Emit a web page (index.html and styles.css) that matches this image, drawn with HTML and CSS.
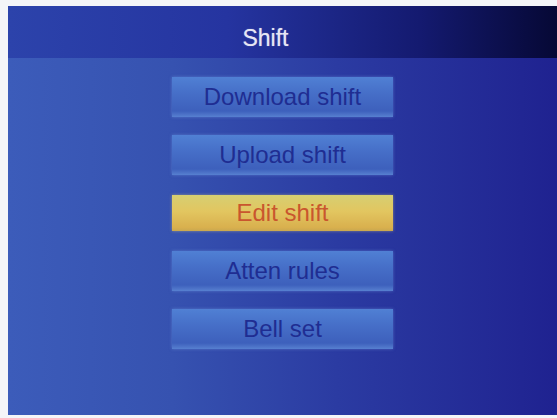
FILE: index.html
```html
<!DOCTYPE html>
<html>
<head>
<meta charset="utf-8">
<link rel="stylesheet" href="styles.css">
</head>
<body>
<div class="screen">
  <div class="header"><span class="title">Shift</span></div>
  <div class="menu">
    <div class="item">Download shift</div>
    <div class="item">Upload shift</div>
    <div class="item active">Edit shift</div>
    <div class="item">Atten rules</div>
    <div class="item">Bell set</div>
  </div>
</div>
</body>
</html>
```
FILE: styles.css
```css
html, body {
  margin: 0;
  padding: 0;
  background: #f4f5f8;
}
body {
  width: 557px;
  height: 418px;
  overflow: hidden;
  font-family: "Liberation Sans", Arial, sans-serif;
}
.screen {
  margin: 6px 0 0 8px;
  width: 549px;
  height: 409px;
  display: flex;
  flex-direction: column;
  background: linear-gradient(90deg, #3c5cba 0%, #3652b0 30%, #2b3ba2 60%, #1f2290 100%);
}
.header {
  height: 52px;
  display: flex;
  align-items: center;
  justify-content: center;
  padding-right: 34px;
  background: linear-gradient(90deg, #2c43ab 0%, #2534a0 40%, #141a70 75%, #060835 100%);
}
.title {
  color: #e6e6f4;
  font-size: 23px;
  padding-top: 13px;
  text-shadow: 0 0 1px rgba(230, 230, 244, 0.6);
}
.menu {
  display: flex;
  flex-direction: column;
  align-items: center;
  gap: 18px;
  padding-top: 19px;
}
.item {
  width: 221px;
  height: 40px;
  display: flex;
  align-items: center;
  justify-content: center;
  font-size: 24px;
  color: #1f2d92;
  background: linear-gradient(180deg, #5080d4 0%, #466fc8 40%, #3d60bc 85%, #5780d0 100%);
  box-shadow: 0 0 3px rgba(120, 160, 230, 0.5);
}
.item.active {
  height: 36px;
  margin: 2px 0;
  color: #c9562e;
  background: linear-gradient(180deg, #d6cf72 0%, #e2c660 45%, #d9b04e 90%, #c9a850 100%);
  box-shadow: 0 0 3px rgba(230, 210, 120, 0.5);
}
```
